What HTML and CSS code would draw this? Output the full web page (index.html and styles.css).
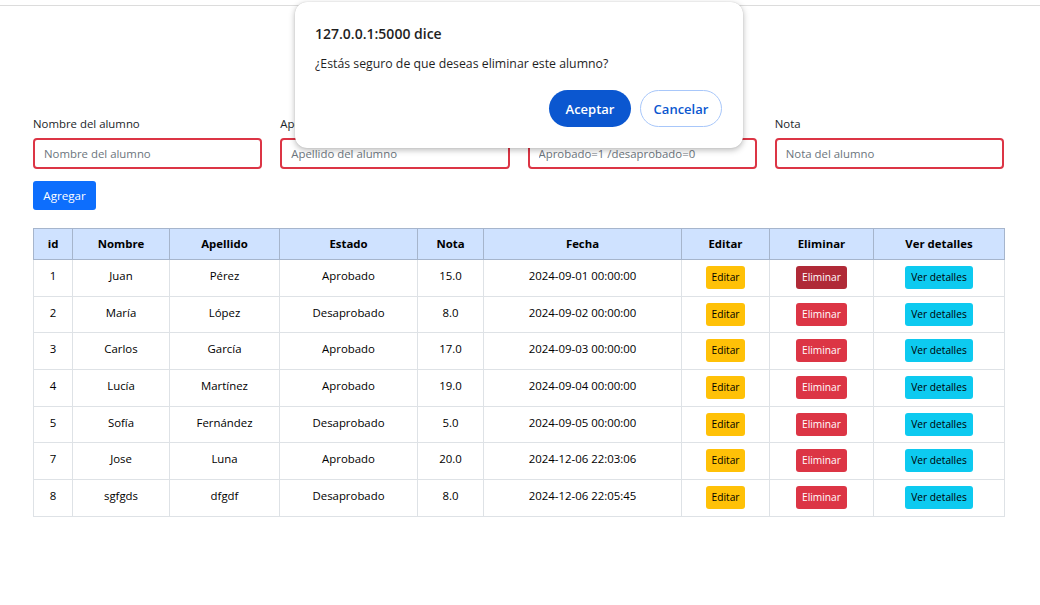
FILE: index.html
```html
<!DOCTYPE html>
<html lang="es">
<head>
<meta charset="utf-8">
<title>Alumnos</title>
<link rel="stylesheet" href="styles.css">
</head>
<body>
<div class="topline"></div>
<main class="page">
  <form class="form-row">
    <div class="field">
      <label>Nombre del alumno</label>
      <input class="ctrl" type="text" placeholder="Nombre del alumno">
    </div>
    <div class="field">
      <label>Apellido del alumno</label>
      <input class="ctrl" type="text" placeholder="Apellido del alumno">
    </div>
    <div class="field">
      <label>Estado</label>
      <input class="ctrl" type="text" placeholder="Aprobado=1 /desaprobado=0">
    </div>
    <div class="field">
      <label>Nota</label>
      <input class="ctrl" type="text" placeholder="Nota del alumno">
    </div>
  </form>
  <button class="btn-add" type="button">Agregar</button>

  <table class="grid">
    <colgroup>
      <col style="width:39px"><col style="width:97px"><col style="width:110px"><col style="width:138px"><col style="width:66px"><col style="width:198px"><col style="width:88px"><col style="width:104px"><col style="width:131px">
    </colgroup>
    <thead>
      <tr><th>id</th><th>Nombre</th><th>Apellido</th><th>Estado</th><th>Nota</th><th>Fecha</th><th>Editar</th><th>Eliminar</th><th>Ver detalles</th></tr>
    </thead>
    <tbody>
      <tr><td>1</td><td>Juan</td><td>Pérez</td><td>Aprobado</td><td>15.0</td><td>2024-09-01 00:00:00</td><td><span class="b b-edit">Editar</span></td><td><span class="b b-del active">Eliminar</span></td><td><span class="b b-info">Ver detalles</span></td></tr>
      <tr><td>2</td><td>María</td><td>López</td><td>Desaprobado</td><td>8.0</td><td>2024-09-02 00:00:00</td><td><span class="b b-edit">Editar</span></td><td><span class="b b-del">Eliminar</span></td><td><span class="b b-info">Ver detalles</span></td></tr>
      <tr><td>3</td><td>Carlos</td><td>García</td><td>Aprobado</td><td>17.0</td><td>2024-09-03 00:00:00</td><td><span class="b b-edit">Editar</span></td><td><span class="b b-del">Eliminar</span></td><td><span class="b b-info">Ver detalles</span></td></tr>
      <tr><td>4</td><td>Lucía</td><td>Martínez</td><td>Aprobado</td><td>19.0</td><td>2024-09-04 00:00:00</td><td><span class="b b-edit">Editar</span></td><td><span class="b b-del">Eliminar</span></td><td><span class="b b-info">Ver detalles</span></td></tr>
      <tr><td>5</td><td>Sofía</td><td>Fernández</td><td>Desaprobado</td><td>5.0</td><td>2024-09-05 00:00:00</td><td><span class="b b-edit">Editar</span></td><td><span class="b b-del">Eliminar</span></td><td><span class="b b-info">Ver detalles</span></td></tr>
      <tr><td>7</td><td>Jose</td><td>Luna</td><td>Aprobado</td><td>20.0</td><td>2024-12-06 22:03:06</td><td><span class="b b-edit">Editar</span></td><td><span class="b b-del">Eliminar</span></td><td><span class="b b-info">Ver detalles</span></td></tr>
      <tr><td>8</td><td>sgfgds</td><td>dfgdf</td><td>Desaprobado</td><td>8.0</td><td>2024-12-06 22:05:45</td><td><span class="b b-edit">Editar</span></td><td><span class="b b-del">Eliminar</span></td><td><span class="b b-info">Ver detalles</span></td></tr>
    </tbody>
  </table>
</main>

<div class="dialog" role="dialog">
  <div class="dlg-title">127.0.0.1:5000 dice</div>
  <div class="dlg-msg">¿Estás seguro de que deseas eliminar este alumno?</div>
  <div class="dlg-actions">
    <button class="dlg-btn dlg-ok" type="button">Aceptar</button>
    <button class="dlg-btn dlg-cancel" type="button">Cancelar</button>
  </div>
</div>
</body>
</html>
```

FILE: styles.css
```css
* { box-sizing: border-box; }
html, body { margin: 0; padding: 0; background: #fff; }
body {
  font-family: "Open Sans", "Noto Sans", "Liberation Sans", sans-serif;
  font-size: 11.4px;
  color: #212529;
  width: 1040px;
  height: 605px;
  overflow: hidden;
}
.topline {
  height: 6px;
  border-bottom: 1px solid #dcdcdc;
}
.page {
  padding: 108px 36px 0 33px;
}
.form-row {
  display: grid;
  grid-template-columns: repeat(4, 1fr);
  column-gap: 18px;
  margin: 0;
}
.field label {
  display: block;
  line-height: 19px;
  margin-bottom: 5px;
  color: #212529;
}
.ctrl {
  display: block;
  width: 100%;
  height: 31px;
  border: 2px solid #dc3545;
  border-radius: 4px;
  padding: 0 9px;
  font: inherit;
  color: #212529;
  outline: none;
  background: #fff;
}
.ctrl::placeholder { color: #6c757d; }
.btn-add {
  display: block;
  margin-top: 12px;
  width: 63px;
  height: 29px;
  background: #0d6efd;
  color: #fff;
  border: 0;
  border-radius: 3px;
  font: inherit;
  font-size: 11.6px;
  padding: 0;
}
.grid {
  margin-top: 18px;
  width: 971px;
  border-collapse: collapse;
  table-layout: fixed;
}
.grid th, .grid td {
  text-align: center;
  padding: 6px 4px;
  line-height: 19px;
  vertical-align: top;
}
.grid thead th {
  background: #cfe2ff;
  color: #000;
  font-weight: 700;
  border: 1px solid #a6b5cc;
  height: 30px;
  padding-top: 5px;
}
.grid tbody td {
  border: 1px solid #dee2e6;
  height: 36.7px;
  color: #000;
  padding-top: 6px;
}
.b {
  display: inline-block;
  height: 23px;
  line-height: 23px;
  padding: 0 6px;
  border-radius: 3px;
  font-size: 10.2px;
  vertical-align: top;
}
.b-edit { background: #ffc107; color: #000; }
.b-del { background: #dc3545; color: #fff; }
.b-del.active { background: #b02a37; }
.b-info { background: #0dcaf0; color: #000; }

.dialog {
  position: absolute;
  left: 295px;
  top: 2px;
  width: 448px;
  height: 146px;
  background: #fff;
  border-radius: 12px;
  box-shadow: 0 2px 6px rgba(0,0,0,0.28), 0 0 1px rgba(0,0,0,0.2);
  padding: 22px 21px 21px 20px;
  display: flex;
  flex-direction: column;
}
.dlg-title {
  font-size: 14px;
  font-weight: 600;
  color: #1f1f1f;
  line-height: 20px;
}
.dlg-msg {
  margin-top: 10px;
  font-size: 12.3px;
  color: #1f1f1f;
  line-height: 20px;
}
.dlg-actions {
  margin-top: auto;
  display: flex;
  justify-content: flex-end;
  gap: 9px;
}
.dlg-btn {
  width: 82px;
  height: 37px;
  border-radius: 19px;
  font: inherit;
  font-size: 13px;
  font-weight: 600;
  padding: 0;
}
.dlg-ok { background: #0b57d0; color: #fff; border: 0; }
.dlg-cancel { background: #fff; color: #0b57d0; border: 1px solid #a8c7fa; }
```
